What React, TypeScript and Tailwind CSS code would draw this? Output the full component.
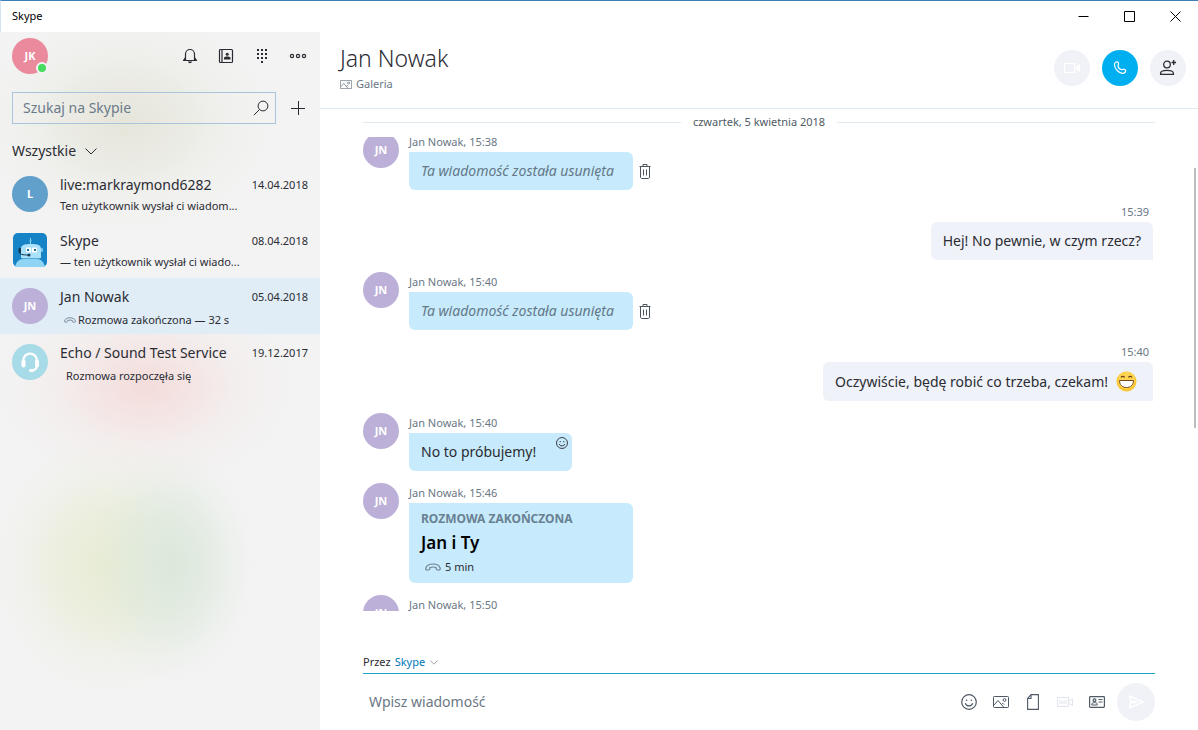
import type { ReactNode } from "react";
import clsx from "clsx";

const conversations = [
  { id: "live", name: "live:markraymond6282", date: "14.04.2018", preview: "Ten użytkownik wysłał ci wiadom...", kind: "text" },
  { id: "skype", name: "Skype", date: "08.04.2018", preview: "— ten użytkownik wysłał ci wiado...", kind: "text" },
  { id: "jan", name: "Jan Nowak", date: "05.04.2018", preview: "Rozmowa zakończona — 32 s", kind: "ended" },
  { id: "echo", name: "Echo / Sound Test Service", date: "19.12.2017", preview: "Rozmowa rozpoczęła się", kind: "started" },
];

interface IconProps {
  size?: number;
  className?: string;
  children: ReactNode;
}

function Icon({ size = 16, className, children }: IconProps) {
  return (
    <svg width={size} height={size} viewBox={`0 0 ${size} ${size}`} fill="none" stroke="currentColor" className={clsx("shrink-0", className)} aria-hidden="true">
      {children}
    </svg>
  );
}

function SmileIcon({ size = 16 }: { size?: number }) {
  return (
    <svg width={size} height={size} viewBox="0 0 16 16" fill="none" stroke="currentColor" strokeWidth="1.2" className="shrink-0" aria-hidden="true">
      <circle cx="8" cy="8" r="7.3" />
      <circle cx="5.6" cy="6.2" r="0.8" fill="currentColor" stroke="none" />
      <circle cx="10.4" cy="6.2" r="0.8" fill="currentColor" stroke="none" />
      <path d="M4.3 9.3a3.9 3.9 0 0 0 7.4 0" />
    </svg>
  );
}

function HangUpIcon({ width }: { width: number }) {
  return (
    <svg width={width} height={width / 2} viewBox="0 0 16 8" fill="none" stroke="currentColor" strokeWidth="1.2" className="shrink-0 text-[#6e7f8f]" aria-hidden="true">
      <path d="M.8 5.2C1.6 2.4 4.6 1 8 1s6.400 1.400 7.200 4.200c.2 1.200-.3 1.800-1.300 1.800h-1.200c-.9 0-1.400-.5-1.500-1.300l-.2-1.200C9.500 4 6.500 4 5 4.500l-.2 1.200C4.700 6.500 4.200 7 3.300 7H2.100C1.100 7 .6 6.400.8 5.200Z" />
    </svg>
  );
}

function PictureIcon({ className }: { className?: string }) {
  return (
    <svg viewBox="0 0 16 12" fill="none" stroke="currentColor" className={clsx("shrink-0", className)} aria-hidden="true">
      <rect x=".5" y=".5" width="15" height="11" rx=".8" />
      <path d="m1 9 4-4.500L10.500 11M8.500 8.500l1.200-1.300 1.500 1.500" />
      <circle cx="11.500" cy="4" r="1.400" />
    </svg>
  );
}

function ChevronIcon({ className }: { className?: string }) {
  return (
    <svg viewBox="0 0 12 7" fill="none" stroke="currentColor" className={clsx("shrink-0 pointer-events-none", className)} aria-hidden="true">
      <path d="m.5.5 5.500 5.500L11.500.5" />
    </svg>
  );
}

function Avatar({ id }: { id: string }) {
  if (id === "skype") {
    return (
      <svg width="36" height="36" viewBox="0 0 36 36" className="shrink-0" aria-hidden="true">
        <rect x="1" y="1" width="34" height="34" rx="5" fill="#1583c5" />
        <path d="M18.500 6v6" stroke="#8fd6f7" />
        <path d="M17 9h3" stroke="#5cb8e8" />
        <path d="M3 35c1-5 4-8 8-8h14c4 0 7 3 8 8z" fill="#8fd4f5" />
        <path d="M9 26v-9c0-4 3-5 10-5s10 1 10 5v9z" fill="#a9e1fa" />
        <path d="M10 26.500h18" stroke="#4ea9d9" />
        <rect x="6.500" y="16" width="2.500" height="5" rx="1" fill="#10374f" />
        <rect x="29" y="16" width="2" height="4" rx="1" fill="#7cc9ef" />
        <rect x="14" y="15.500" width="5" height="5" rx="1" fill="#fff" />
        <rect x="20" y="15.500" width="5" height="5" rx="1" fill="#fff" />
        <path d="M15 17h2v2h-2zM22 17h2v2h-2z" fill="#1d6da0" />
        <path d="M7.500 20c0 2.500 3 3 9 3" fill="none" stroke="#10374f" />
        <circle cx="17" cy="23" r="1.500" fill="#10374f" />
      </svg>
    );
  }
  if (id === "echo") {
    return (
      <svg width="36" height="36" viewBox="0 0 36 36" fill="none" className="shrink-0" aria-hidden="true">
        <circle cx="18" cy="18" r="18" fill="#a8dbe8" />
        <path d="M11.200 18v-1.500a6.900 6.900 0 0 1 13.800 0V21c0 3-1.600 5.300-5.600 5.300" stroke="#fff" strokeWidth="2.200" />
        <rect x="9.500" y="15.500" width="4" height="8" rx="2" fill="#fff" />
        <rect x="23" y="15.500" width="4" height="8" rx="2" fill="#fff" />
        <rect x="17" y="25" width="5" height="3" rx="1.500" fill="#fff" />
      </svg>
    );
  }
  return (
    <span className={clsx("flex size-9 shrink-0 items-center justify-center rounded-full text-[11px] leading-4 font-bold text-white", id === "live" ? "bg-[#62a0cc]" : "bg-[#bcb0d8]")}>
      {id === "live" ? "L" : "JN"}
    </span>
  );
}

function Sidebar() {
  const tool = "flex size-9 items-center justify-center";
  return (
    <aside className="flex w-80 shrink-0 flex-col bg-[#f3f3f3] bg-[radial-gradient(150px_110px_at_125px_90px,#e5e5da_0%,#e5e5da99_35%,#e5e5da33_70%,#e5e5da00_100%),radial-gradient(150px_100px_at_145px_355px,#f4dcda_0%,#f4dcda99_30%,#f4dcda33_62%,#f4dcda00_100%),radial-gradient(85px_120px_at_172px_533px,#dce8dc_0%,#dce8dcaa_40%,#dce8dc33_75%,#dce8dc00_100%),radial-gradient(115px_130px_at_108px_533px,#e8ecd4_0%,#e8ecd4aa_42%,#e8ecd433_75%,#e8ecd400_100%)]">
      <div className="flex items-center pt-1.5 pr-1 pl-3">
        <button type="button" aria-label="Profil" className="relative mr-auto flex size-9 items-center justify-center rounded-full bg-[#ea8a9c] text-[11px] font-bold text-white">
          JK
          <span className="absolute right-0 bottom-0 size-3 rounded-full border-2 border-[#f3f3f3] bg-[#45db5e]" />
        </button>
        <button type="button" aria-label="Powiadomienia" className={tool}>
          <Icon>
            <path d="M1 12.500h14M3.500 12.200V6a4.500 4.500 0 0 1 9 0v6.200M3.500 9.500l-2 3M12.500 9.500l2 3" strokeWidth="1.200" />
            <path d="M5.800 13.500a2.300 2.300 0 0 0 4.400 0z" fill="currentColor" stroke="none" />
          </Icon>
        </button>
        <button type="button" aria-label="Kontakty" className={tool}>
          <Icon>
            <rect x="1.500" y="1.500" width="13" height="13" rx="1" strokeWidth="1.200" />
            <path d="M4 1.500v13" strokeWidth="1.200" />
            <circle cx="9.200" cy="6.200" r="1.500" fill="currentColor" stroke="none" />
            <path d="M6 11.500V10c0-1 1.200-1.500 3.200-1.500s3.300.5 3.300 1.500v1.500z" fill="currentColor" stroke="none" />
          </Icon>
        </button>
        <button type="button" aria-label="Klawiatura" className={tool}>
          <Icon>
            <path d="M3 2h2M7 2h2M11 2h2M3 6h2M7 6h2M11 6h2M3 10h2M7 10h2M11 10h2M7 14h2" strokeWidth="2" />
          </Icon>
        </button>
        <button type="button" aria-label="Więcej" className={tool}>
          <Icon size={18}>
            <circle cx="3" cy="9" r="1.600" strokeWidth="1.200" />
            <circle cx="9" cy="9" r="1.600" strokeWidth="1.200" />
            <circle cx="15" cy="9" r="1.600" strokeWidth="1.200" />
          </Icon>
        </button>
      </div>

      <div className="mt-4 flex items-center pr-1 pl-3">
        <label className="flex h-8 min-w-0 flex-1 items-center border border-[#a9c3d9] px-2.5 pr-1.5">
          <input type="search" aria-label="Szukaj na Skypie" placeholder="Szukaj na Skypie" className="min-w-0 flex-1 bg-transparent text-sm outline-none placeholder:text-[#6b7a8a]" />
          <Icon>
            <circle cx="10" cy="6" r="4.900" />
            <path d="M6.500 9.500.8 15.200" />
          </Icon>
        </label>
        <button type="button" aria-label="Nowa rozmowa" className="ml-1 flex size-9 items-center justify-center">
          <Icon>
            <path d="M1 8.500h14M8.500 1v14" />
          </Icon>
        </button>
      </div>

      <div className="mt-2.5 flex h-[30px] items-center gap-2 pl-3">
        <select aria-label="Filtr rozmów" className="appearance-none bg-transparent text-sm outline-none">
          <option>Wszystkie</option>
        </select>
        <ChevronIcon className="h-[7px] w-3" />
      </div>

      <ul>
        {conversations.map((c) => (
          <li key={c.id}>
            <a href={`#${c.id}`} className={clsx("flex h-14 items-start gap-3 px-3 py-2.5", c.id === "jan" && "bg-[#e0edf6]")}>
              <Avatar id={c.id} />
              <span className="min-w-0 flex-1">
                <span className="flex items-center justify-between">
                  <span className="text-sm leading-[18px]">{c.name}</span>
                  <span className="text-[11px] leading-[18px]">{c.date}</span>
                </span>
                <span className={clsx("flex items-center text-[11px] leading-5", c.kind === "text" && "mt-0.5", c.kind === "ended" && "mt-1 gap-0.5 pl-1", c.kind === "started" && "mt-1 pl-1.5")}>
                  {c.kind === "ended" && <HangUpIcon width={12} />}
                  {c.preview}
                </span>
              </span>
            </a>
          </li>
        ))}
      </ul>
    </aside>
  );
}

function Incoming({ time, children }: { time: string; children?: ReactNode }) {
  return (
    <div className="flex gap-2.5">
      <Avatar id="jan" />
      <div>
        <p className="py-0.5 text-[11px] leading-4 text-[#6b7785]">Jan Nowak, {time}</p>
        {children}
      </div>
    </div>
  );
}

function Outgoing({ time, children }: { time: string; children: ReactNode }) {
  return (
    <div className="flex flex-col items-end">
      <p className="py-0.5 pr-1 text-[11px] leading-4 text-[#6b7785]">{time}</p>
      <div className="flex items-center rounded-md rounded-br-none bg-[#eff2f8] px-3 py-[9px] text-sm leading-5">{children}</div>
    </div>
  );
}

function Removed() {
  return (
    <div className="flex items-center gap-1.5">
      <p className="min-w-56 rounded-md rounded-tl-none bg-[#c7ebfc] px-3 py-[9px] text-sm leading-5 text-[#647889] italic">Ta wiadomość została usunięta</p>
      <svg width="12" height="16" viewBox="0 0 12 16" fill="none" stroke="#4b535c" aria-hidden="true">
        <path d="M.5 3.500h11M4 3.200V1.500h4v1.700M1.500 3.500V14c0 .8.400 1.500 1.200 1.500h6.600c.8 0 1.200-.7 1.200-1.500V3.500M4.500 6.500v6M7.500 6.500v6" />
      </svg>
    </div>
  );
}

function GrinEmoji() {
  return (
    <svg width="21" height="21" viewBox="0 0 21 21" className="ml-2 mr-1 shrink-0" role="img" aria-label="uśmiech">
      <circle cx="10.500" cy="10.500" r="10" fill="#fcc633" />
      <circle cx="10.500" cy="9.500" r="8.500" fill="#fed552" />
      <path d="M5 6.500c.8-1.500 2.800-1.500 3.600 0M12.400 6.500c.8-1.500 2.800-1.500 3.600 0" fill="none" stroke="#6d4218" strokeWidth="1.200" />
      <path d="M3.500 9.500h14c0 4.500-3 7-7 7s-7-2.500-7-7z" fill="#fff" stroke="#7a4a1c" />
    </svg>
  );
}

function Chat() {
  const tool = "flex size-8 items-center justify-center";
  return (
    <main className="flex min-w-0 flex-1 flex-col">
      <header className="flex items-start justify-between border-b border-[#e1eaf0] pt-2.5 pr-3 pb-3.5 pl-5">
        <div>
          <h1 className="text-[23px] leading-8 font-light">Jan Nowak</h1>
          <a href="#galeria" className="flex items-center gap-1 text-[11px] leading-5 text-[#6b7785]">
            <PictureIcon className="h-[9px] w-3" />
            Galeria
          </a>
        </div>
        <div className="flex gap-3 pt-2">
          <button type="button" disabled aria-label="Rozmowa wideo" className="flex size-9 items-center justify-center rounded-full bg-[#f0f2f7] text-white">
            <Icon>
              <rect x=".6" y="3.500" width="10" height="9" strokeWidth="1.200" />
              <path d="M12 7l3.500-2.500v7L12 9z" fill="currentColor" />
            </Icon>
          </button>
          <button type="button" aria-label="Zadzwoń" className="flex size-9 items-center justify-center rounded-full bg-[#00aff0] text-white">
            <Icon>
              <path d="M4 2c1.400-.6 2.500.3 2.600 1.700.1 1-.7 1.300-.6 2.200.2 1.700 1.900 3.400 3.500 3.800.9.200 1.300-.7 2.300-.6 1.500.2 2.300 1.500 1.600 2.800-.6 1.100-1.700 1.600-3.100 1.400C6.500 12.700 3 9.200 2.500 5.200 2.300 3.600 2.900 2.500 4 2Z" strokeWidth="1.200" />
            </Icon>
          </button>
          <button type="button" aria-label="Dodaj osobę" className="flex size-9 items-center justify-center rounded-full bg-[#f0f2f7]">
            <Icon size={18}>
              <circle cx="8" cy="5.500" r="3.300" strokeWidth="1.300" />
              <path d="M1.600 15.400v-1c0-1.900 2.600-3 6.400-3s6.400 1.100 6.400 3v1zM12.500 3.500H17M14.700 1v5" strokeWidth="1.300" />
            </Icon>
          </button>
        </div>
      </header>

      <div className="relative flex min-h-0 flex-1 flex-col">
        <div className="flex h-7 shrink-0 items-center gap-3 px-[43px] pb-0.5 text-[11px] text-[#4f5a66]">
          <span className="h-px flex-1 bg-[#e1eaf0]" />
          czwartek, 5 kwietnia 2018
          <span className="h-px flex-1 bg-[#e1eaf0]" />
        </div>
        <div className="min-h-0 flex-1 overflow-hidden pr-[45px] pl-[43px]">
          <div className="-mt-[5px] flex flex-col gap-3">
            <Incoming time="15:38">
              <Removed />
            </Incoming>
            <Outgoing time="15:39">Hej! No pewnie, w czym rzecz?</Outgoing>
            <Incoming time="15:40">
              <Removed />
            </Incoming>
            <Outgoing time="15:40">
              Oczywiście, będę robić co trzeba, czekam!
              <GrinEmoji />
            </Outgoing>
            <Incoming time="15:40">
              <div className="relative w-fit rounded-md rounded-tl-none bg-[#c7ebfc] py-[9px] pr-9 pl-3 text-sm leading-5">
                No to próbujemy!
                <button type="button" aria-label="Dodaj reakcję" className="absolute top-1 right-1">
                  <SmileIcon size={12} />
                </button>
              </div>
            </Incoming>
            <Incoming time="15:46">
              <div className="w-56 rounded-md rounded-tl-none bg-[#c7ebfc] px-3 pt-1.5 pb-1">
                <p className="text-xs leading-5 font-bold text-[#6a8193] uppercase">Rozmowa zakończona</p>
                <p className="pt-0.5 text-[17px] leading-6 font-semibold text-black">Jan i Ty</p>
                <p className="flex items-center gap-1 pl-1 text-[11px] leading-6">
                  <HangUpIcon width={16} />5 min
                </p>
              </div>
            </Incoming>
            <Incoming time="15:50" />
          </div>
        </div>
        <div className="absolute top-[59px] right-0.5 h-[260px] w-0.5 bg-[#bdbdbd]" />
      </div>

      <form className="shrink-0 px-[43px] pt-[41px] pb-[9px]" onSubmit={(e) => e.preventDefault()}>
        <div className="flex items-center gap-1 border-b border-b-[#1e9fc8] pb-px text-[11px] leading-5">
          <label htmlFor="via">Przez</label>
          <select id="via" className="appearance-none bg-transparent text-[#0078b8] outline-none">
            <option>Skype</option>
          </select>
          <ChevronIcon className="h-[5px] w-2 text-[#6b7785]" />
        </div>
        <div className="flex items-center pt-[9px] text-[#4f5a66]">
          <input type="text" aria-label="Wiadomość" placeholder="Wpisz wiadomość" className="mr-4 min-w-0 flex-1 pl-1.5 text-sm outline-none placeholder:text-[#6b7785]" />
          <button type="button" aria-label="Emotikony" className={tool}>
            <SmileIcon />
          </button>
          <button type="button" aria-label="Zdjęcie" className={tool}>
            <PictureIcon className="h-3 w-4" />
          </button>
          <button type="button" aria-label="Plik" className={tool}>
            <Icon>
              <path d="M6 .6h7.400v14.800H2.600V4.500zM6 .6v3.900H2.600" strokeWidth="1.100" />
            </Icon>
          </button>
          <button type="button" disabled aria-label="Wiadomość wideo" className={clsx(tool, "text-[#dfe5ec]")}>
            <Icon>
              <path d="M.5 3.500h11v9H.5zM3 6v4M5 7v3M7 7v3M9 6v4M12 7l3.500-2v6.500L12 9.500" />
            </Icon>
          </button>
          <button type="button" aria-label="Wizytówka" className={tool}>
            <Icon>
              <rect x=".6" y="2.600" width="14.800" height="10.800" rx=".8" strokeWidth="1.200" />
              <circle cx="5.500" cy="6.200" r="1.400" strokeWidth="1.200" />
              <path d="M2.800 11V10c0-1 1.100-1.300 2.700-1.300s2.700.3 2.700 1.300v1zM9.500 5.500h4M9.500 8h4" />
            </Icon>
          </button>
          <button type="submit" aria-label="Wyślij" className="ml-1 flex size-[38px] items-center justify-center rounded-full bg-[#f0f2f7] text-white">
            <Icon>
              <path d="M1.500 2 15 8 1.500 14l1.200-5.200L9 8l-6.300-.8z" strokeWidth="1.500" strokeLinejoin="round" />
            </Icon>
          </button>
        </div>
      </form>
    </main>
  );
}

export default function App() {
  const control = "flex w-[46px] items-center justify-center";
  return (
    <div className="flex h-screen flex-col overflow-hidden bg-white font-['Noto_Sans','Open_Sans',sans-serif] text-[#2b2c33]">
      <div className="flex h-8 shrink-0 border-t border-l border-t-[#3f7fb8] border-l-[#d3e4f2] text-black">
        <span className="mr-auto flex items-center pl-[11px] text-[11px]">Skype</span>
        <button type="button" aria-label="Minimalizuj" className={control}>
          <Icon size={11}>
            <path d="M.5 5.500h10" />
          </Icon>
        </button>
        <button type="button" aria-label="Maksymalizuj" className={control}>
          <Icon size={11}>
            <path d="M.5.5h10v10H.5z" />
          </Icon>
        </button>
        <button type="button" aria-label="Zamknij" className={control}>
          <Icon size={11}>
            <path d="m.5.5 10 10m0-10-10 10" />
          </Icon>
        </button>
      </div>
      <div className="flex min-h-0 flex-1">
        <Sidebar />
        <Chat />
      </div>
    </div>
  );
}
